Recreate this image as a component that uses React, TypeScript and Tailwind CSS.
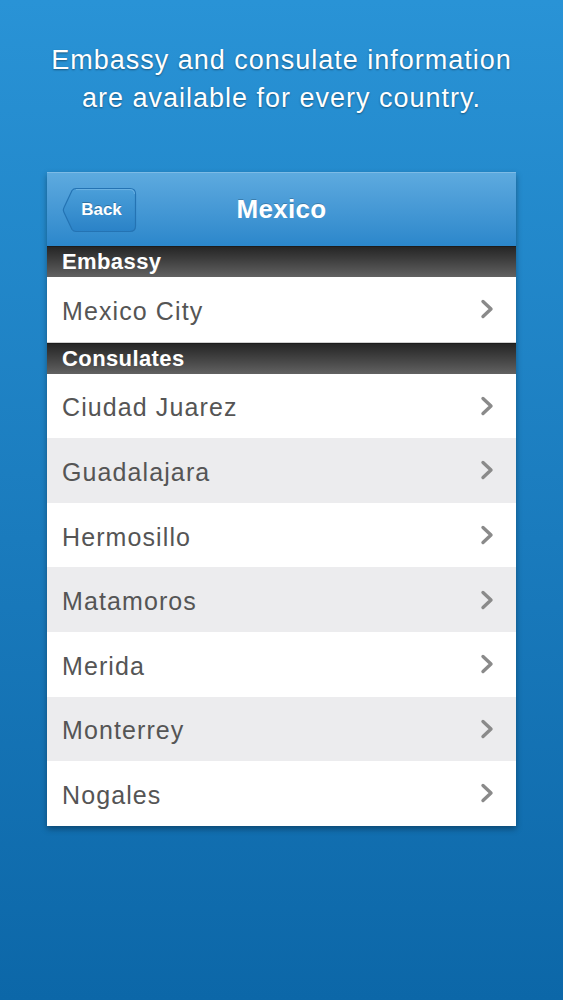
import React from "react";

const consulates = [
  "Ciudad Juarez",
  "Guadalajara",
  "Hermosillo",
  "Matamoros",
  "Merida",
  "Monterrey",
  "Nogales",
];

const Chevron = () => (
  <svg width="14" height="20" viewBox="0 0 14 20" className="shrink-0">
    <path
      d="M3 2.5 L11 10 L3 17.5"
      fill="none"
      stroke="#8a8a8a"
      strokeWidth="3.4"
      strokeLinecap="round"
      strokeLinejoin="round"
    />
  </svg>
);

const BackButton = () => (
  <button className="relative w-[75px] h-[46px] flex items-center justify-center pl-[4px]">
    <svg
      width="75"
      height="46"
      viewBox="0 0 75 46"
      className="absolute inset-0"
    >
      <defs>
        <linearGradient id="backFill" x1="0" y1="0" x2="0" y2="1">
          <stop offset="0" stopColor="#4b9fd9" />
          <stop offset="1" stopColor="#2a82c7" />
        </linearGradient>
      </defs>
      <path
        d="M14 1.5 H68 Q73.5 1.5 73.5 7 V39 Q73.5 44.5 68 44.5 H14 Q11.5 44.5 10 42.5 L1.8 25 Q0.8 23 1.8 21 L10 3.5 Q11.5 1.5 14 1.5 Z"
        fill="url(#backFill)"
        stroke="#2473b3"
        strokeWidth="1.2"
      />
      <path
        d="M14 2.6 H68 Q72.4 2.6 72.4 7"
        fill="none"
        stroke="#7cbce8"
        strokeWidth="1"
        opacity="0.7"
      />
    </svg>
    <span className="relative text-white font-bold text-[17px] [text-shadow:0_-1px_0_rgba(0,0,0,0.25)]">
      Back
    </span>
  </button>
);

const SectionHeader = ({ title }: { title: string }) => (
  <div className="h-[31px] flex items-center px-[15px] bg-gradient-to-b from-[#262626] to-[#626262] border-t border-[#1c1c1c]">
    <span className="text-white font-bold text-[22px] tracking-[0.4px] leading-none">
      {title}
    </span>
  </div>
);

const Row = ({ label, shaded }: { label: string; shaded?: boolean }) => (
  <div
    className={`flex items-center justify-between pl-[15px] pr-[22px] ${
      shaded ? "bg-[#ececee]" : "bg-white"
    }`}
    style={{ height: "64.6px" }}
  >
    <span className="text-[#555555] text-[25px] tracking-[1.1px] leading-none pt-[4px]">
      {label}
    </span>
    <Chevron />
  </div>
);

export default function App() {
  return (
    <div className="min-h-[1000px] w-full bg-gradient-to-b from-[#2993d6] to-[#0c67a8] font-['Liberation_Sans',Arial,sans-serif] flex flex-col items-center pt-[41px]">
      <p className="text-white text-[27px] leading-[38px] tracking-[1px] text-center [text-shadow:0_1px_2px_rgba(0,0,0,0.4)]">
        Embassy and consulate information
        <br />
        are available for every country.
      </p>

      <div className="mt-[55px] w-[469px] bg-white shadow-[0_3px_6px_rgba(0,0,0,0.35)]">
        <div className="h-[74px] grid grid-cols-[1fr_auto_1fr] items-center px-[15px] bg-gradient-to-b from-[#5daadf] to-[#2b87cb] border-t border-[#7dbbe6]">
          <div className="flex items-center">
            <BackButton />
          </div>
          <h1 className="text-white font-bold text-[26px] tracking-[0.3px] [text-shadow:0_-1px_0_rgba(0,0,0,0.2)]">
            Mexico
          </h1>
          <div />
        </div>

        <SectionHeader title="Embassy" />
        <div className="border-b border-[#cfcfcf]">
          <Row label="Mexico City" />
        </div>

        <SectionHeader title="Consulates" />
        {consulates.map((c, i) => (
          <Row key={c} label={c} shaded={i % 2 === 1} />
        ))}
      </div>
    </div>
  );
}
